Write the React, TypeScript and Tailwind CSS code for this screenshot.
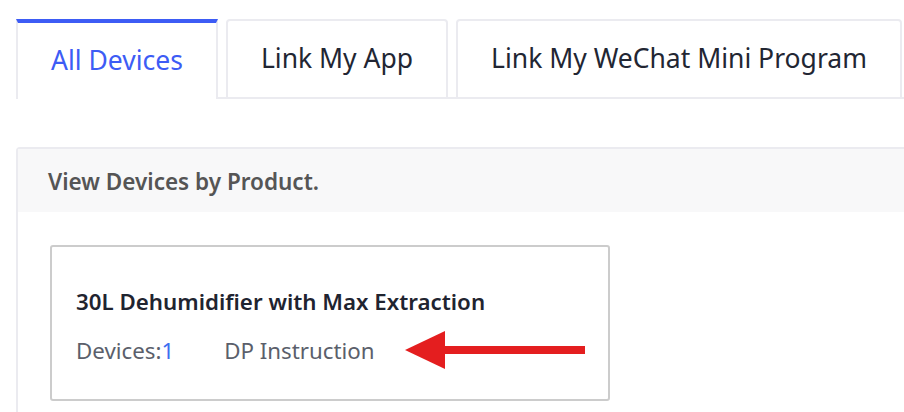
import React from 'react';

const font = "font-['Noto_Sans','Open_Sans',sans-serif]";

const tabs = [
  { label: 'All Devices', active: true },
  { label: 'Link My App', active: false },
  { label: 'Link My WeChat Mini Program', active: false },
];

function Arrow() {
  return (
    <svg width="182" height="40" viewBox="0 0 182 40" className="ml-[30px] -mt-[2px]">
      <polygon points="0,20 40,1 40,39" fill="#e41e1f" />
      <rect x="38" y="16" width="142" height="8" fill="#e41e1f" />
    </svg>
  );
}

export default function App() {
  return (
    <div className={`w-[904px] h-[412px] bg-white overflow-hidden pl-4 pt-[19px] ${font}`}>
      {/* ── Tabs ── */}
      <div className="flex gap-2 border-b-2 border-[#ebebf0] h-[80px]">
        {tabs.map((t) =>
          t.active ? (
            <div
              key={t.label}
              className="-mb-[2px] h-[80px] bg-white border-t-4 border-x-2 border-t-[#3d5cf5] border-x-[#ebebf0] px-[33px] flex items-center text-[26.5px] text-[#3d5cf5] whitespace-nowrap"
            >
              {t.label}
            </div>
          ) : (
            <div
              key={t.label}
              className="h-[80px] -mb-[2px] border-2 border-[#ebebf0] rounded-t-[4px] px-[33px] flex items-center text-[26.5px] text-[#222633] whitespace-nowrap"
            >
              {t.label}
            </div>
          ),
        )}
      </div>

      {/* ── Product panel ── */}
      <div className="mt-[48px] border-2 border-r-0 border-[#ebebf0] rounded-tl-[4px] h-[300px]">
        <div className="h-[63px] bg-[#f8f8f9] flex items-center pl-[30px] pt-[2px] text-[22.5px] font-semibold text-[#555555]">
          View Devices by Product.
        </div>
        <div className="pt-[33px] pl-[32px]">
          <div className="w-[560px] h-[156px] border-2 border-[#cccccc] rounded-[3px] pl-[24px] pt-[40px]">
            <div className="text-[22.3px] font-semibold text-[#1f2430] leading-[30px] whitespace-nowrap">
              30L Dehumidifier with Max Extraction
            </div>
            <div className="flex items-center mt-[15px] text-[22.3px] text-[#5b5f6b] leading-[30px] whitespace-nowrap">
              <span>
                Devices:<span className="text-[#3d6ef0]">1</span>
              </span>
              <span className="ml-[50px]">DP Instruction</span>
              <Arrow />
            </div>
          </div>
        </div>
      </div>
    </div>
  );
}
